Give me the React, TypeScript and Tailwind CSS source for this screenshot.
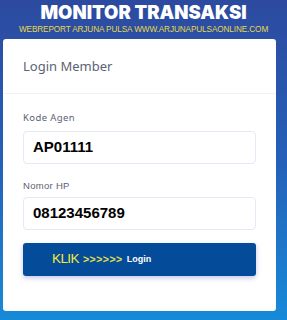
export default function App() {
  return (
    <div className="h-[320px] w-[287px] overflow-hidden bg-gradient-to-b from-[#2c4a9f] via-[#2460b8] to-[#168ad8] font-['Liberation_Sans',Arial,sans-serif]">
      <div className="flex flex-col items-center">
        <h1 className="font-['Inter',sans-serif] text-[18.5px] font-black leading-[24px] text-white">MONITOR TRANSAKSI</h1>
        <p className="mt-[1px] text-[8.2px] leading-[10px] tracking-[-0.1px] text-[#e6d84a]">WEBREPORT ARJUNA PULSA WWW.ARJUNAPULSAONLINE.COM</p>
      </div>
      <div className="mx-[3px] mt-[4px] h-[272px] w-[273px] rounded-[3px] bg-white font-['Noto_Sans',sans-serif]">
        <div className="border-b border-[#f1f2f6] px-[20px] pb-[18px] pt-[18px]">
          <h2 className="text-[13px] leading-[18px] text-[#5c6275]">Login Member</h2>
        </div>
        <div className="px-[20px] pt-[18px]">
          <label className="block text-[9.5px] leading-[12px] tracking-[0.4px] text-[#5c6275]">Kode Agen</label>
          <div className="mt-[7px] flex h-[33px] items-center rounded-[4px] border border-[#e6e8f5] px-[9px] font-['Liberation_Sans',Arial,sans-serif] text-[15px] font-bold text-black">
            AP01111
          </div>
          <label className="mt-[16px] block font-['Liberation_Sans',Arial,sans-serif] text-[9.5px] leading-[12px] tracking-[0.3px] text-[#5c6275]">Nomor HP</label>
          <div className="mt-[5px] flex h-[33px] items-center rounded-[4px] border border-[#e6e8f5] px-[9px] font-['Liberation_Sans',Arial,sans-serif] text-[15px] font-bold text-black">
            08123456789
          </div>
          <button className="mt-[13px] flex h-[33px] w-full items-center rounded-[3px] bg-[#044c99] pl-[29px] font-['Liberation_Sans',Arial,sans-serif] shadow-[0_2px_5px_rgba(90,90,200,0.35)]">
            <span className="text-[13.5px] tracking-[-0.6px] text-[#f2ea3c]">KLIK</span>
            <span className="ml-[4px] text-[10.5px] font-bold tracking-[0.5px] text-[#e8e04a]">&gt;&gt;&gt;&gt;&gt;&gt;</span>
            <span className="ml-[4px] text-[9px] font-bold text-white">Login</span>
          </button>
        </div>
      </div>
    </div>
  )
}
